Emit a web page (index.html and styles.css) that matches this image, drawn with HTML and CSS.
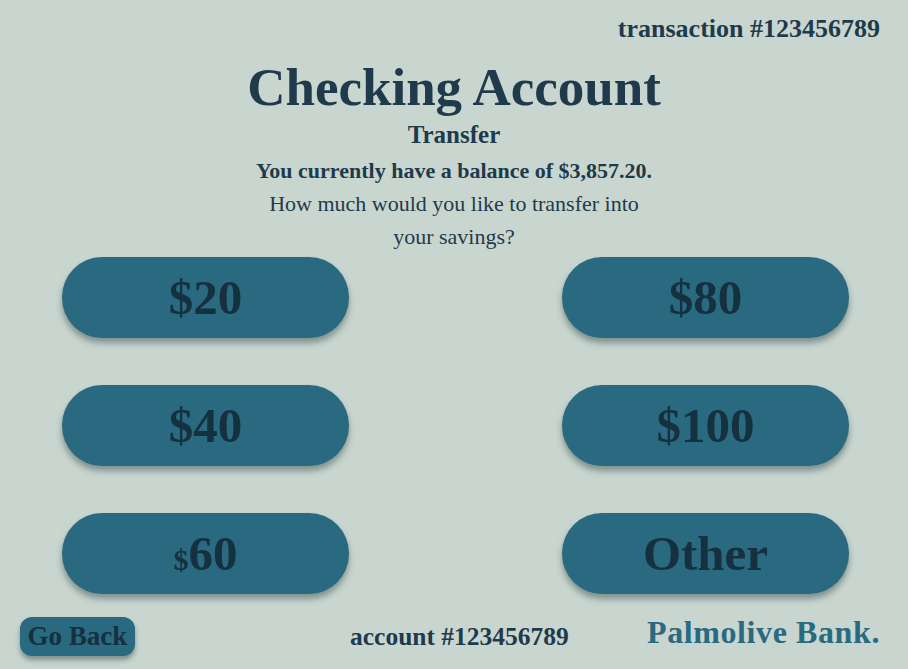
FILE: index.html
```html
<!DOCTYPE html>
<html lang="en">
<head>
<meta charset="utf-8">
<title>Checking Account - Transfer</title>
<link rel="stylesheet" href="styles.css">
</head>
<body>
<div class="screen">
  <header class="topbar">
    <span class="txn">transaction #123456789</span>
  </header>
  <section class="intro">
    <h1 class="title">Checking Account</h1>
    <h2 class="subtitle">Transfer</h2>
    <p class="balance">You currently have a balance of $3,857.20.</p>
    <p class="question">How much would you like to transfer into your savings?</p>
  </section>
  <section class="amounts">
    <button class="amount">$20</button>
    <button class="amount">$80</button>
    <button class="amount">$40</button>
    <button class="amount">$100</button>
    <button class="amount"><span class="small-dollar">$</span>60</button>
    <button class="amount">Other</button>
  </section>
  <footer class="bottombar">
    <button class="back">Go Back</button>
    <span class="acct">account #123456789</span>
    <span class="brand">Palmolive Bank.</span>
  </footer>
</div>
</body>
</html>
```
FILE: styles.css
```css
html, body {
  margin: 0;
  padding: 0;
}
body {
  background: #c9d6d0;
  color: #1f3a4a;
  font-family: "Liberation Serif", "DejaVu Serif", serif;
}
.screen {
  width: 908px;
  height: 669px;
  display: flex;
  flex-direction: column;
  box-sizing: border-box;
}
.topbar {
  display: flex;
  justify-content: flex-end;
  padding: 14px 28px 0 0;
  height: 30px;
}
.txn {
  font-weight: 700;
  font-size: 26px;
  line-height: 30px;
}
.intro {
  text-align: center;
  display: flex;
  flex-direction: column;
  align-items: center;
}
.title {
  margin: 14px 0 0;
  font-size: 53px;
  line-height: 58px;
  font-weight: 700;
}
.subtitle {
  margin: 4px 0 0;
  font-size: 25px;
  line-height: 30px;
  font-weight: 700;
}
.balance {
  margin: 7px 0 0;
  font-size: 22px;
  line-height: 28px;
  font-weight: 700;
}
.question {
  margin: 2px 0 0;
  width: 400px;
  font-size: 22px;
  line-height: 33px;
}
.amounts {
  display: grid;
  grid-template-columns: 287px 287px;
  grid-auto-rows: 81px;
  column-gap: 213px;
  row-gap: 47px;
  margin: 4px 0 0 62px;
}
.amount {
  border: none;
  border-radius: 40px;
  background: #2a6a80;
  color: #15303f;
  font-family: inherit;
  font-weight: 700;
  font-size: 49px;
  box-shadow: 0 5px 6px rgba(40, 60, 60, 0.45);
  padding: 0;
  cursor: pointer;
}
.small-dollar {
  font-size: 30px;
}
.bottombar {
  display: flex;
  align-items: center;
  margin-top: auto;
  padding: 0 28px 13px 20px;
}
.back {
  border: none;
  background: #2a6a80;
  color: #15303f;
  border-radius: 12px;
  font-family: inherit;
  font-weight: 700;
  font-size: 27px;
  width: 115px;
  height: 39px;
  padding: 0;
  box-shadow: 0 4px 5px rgba(40, 60, 60, 0.45);
}
.acct {
  margin-left: 215px;
  font-weight: 700;
  font-size: 25.5px;
}
.brand {
  margin-left: auto;
  color: #2a6a80;
  font-weight: 700;
  font-size: 32px;
  letter-spacing: 0.6px;
  position: relative;
  top: -4px;
}
```
